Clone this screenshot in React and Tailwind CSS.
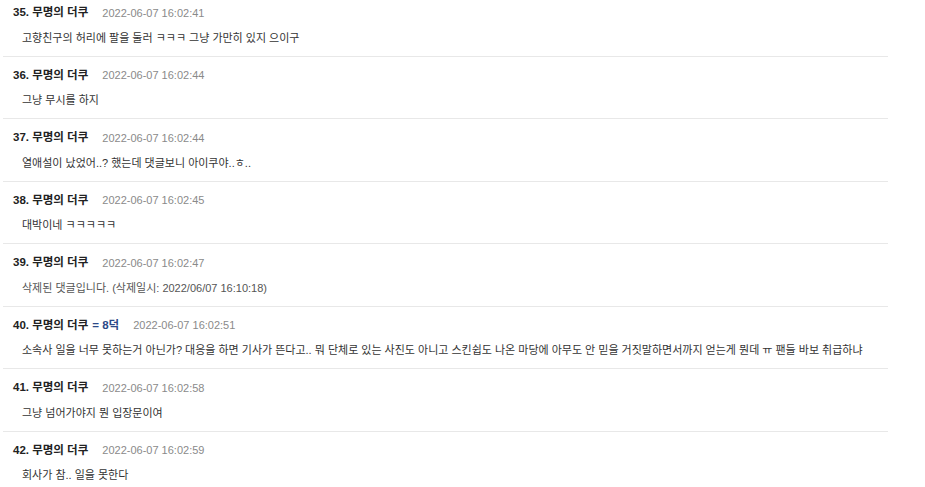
const COMMENTS = [
  { no: 35, date: '2022-06-07 16:02:41', body: '고향친구의 허리에 팔을 둘러 ㅋㅋㅋ 그냥 가만히 있지 으이구' },
  { no: 36, date: '2022-06-07 16:02:44', body: '그냥 무시를 하지' },
  { no: 37, date: '2022-06-07 16:02:44', body: '열애설이 났었어..? 했는데 댓글보니 아이쿠야..ㅎ..' },
  { no: 38, date: '2022-06-07 16:02:45', body: '대박이네 ㅋㅋㅋㅋㅋ' },
  { no: 39, date: '2022-06-07 16:02:47', body: '삭제된 댓글입니다. (삭제일시: 2022/06/07 16:10:18)', deleted: true },
  {
    no: 40,
    date: '2022-06-07 16:02:51',
    badge: '= 8덕',
    body: '소속사 일을 너무 못하는거 아닌가? 대응을 하면 기사가 뜬다고.. 뭐 단체로 있는 사진도 아니고 스킨쉽도 나온 마당에 아무도 안 믿을 거짓말하면서까지 얻는게 뭔데 ㅠ 팬들 바보 취급하냐',
  },
  { no: 41, date: '2022-06-07 16:02:58', body: '그냥 넘어가야지 뭔 입장문이여' },
  { no: 42, date: '2022-06-07 16:02:59', body: '회사가 참.. 일을 못한다' },
];

export default function App() {
  return (
    <div
      className="w-[925px] h-[487px] overflow-hidden bg-white"
      style={{ fontFamily: '"Liberation Sans", "Noto Sans CJK KR", sans-serif' }}
    >
      <ul className="ml-[3px] w-[885px]">
        {COMMENTS.map((c, i) => (
          <li
            key={c.no}
            className={`border-b border-[#e8e8e8] pb-[7.5px] ${i === 0 ? 'pt-[3px]' : 'pt-[9px]'}`}
          >
            <div className="flex items-center h-[20px] pl-[10px]">
              <span className="text-[11.5px] font-bold text-[#222]">
                {c.no}. 무명의 더쿠
              </span>
              {c.badge && (
                <span className="ml-[4px] text-[11.5px] font-bold text-[#2c4a88]">{c.badge}</span>
              )}
              <span className="ml-[14px] text-[11px] text-[#8a8a8a]">{c.date}</span>
            </div>
            <div className="flex items-center h-[20px] mt-[5px] pl-[19px]">
              <p className={`text-[11px] whitespace-nowrap ${c.deleted ? 'text-[#555]' : 'text-[#333]'}`}>
                {c.body}
              </p>
            </div>
          </li>
        ))}
      </ul>
    </div>
  );
}
